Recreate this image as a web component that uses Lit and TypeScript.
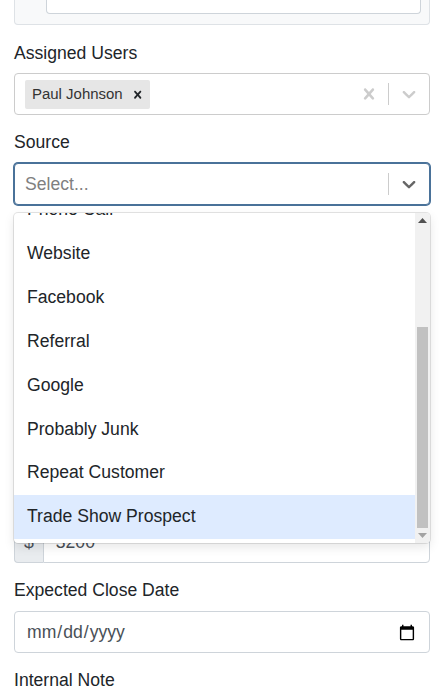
import { LitElement, html, css, svg } from "lit";
import { customElement } from "lit/decorators.js";

const chevron = svg`<path d="M4.516 7.548c0.436-0.446 1.043-0.481 1.576 0l3.908 3.747 3.908-3.747c0.533-0.481 1.141-0.446 1.576 0 0.436 0.445 0.408 1.197 0 1.615-0.406 0.418-4.695 4.502-4.695 4.502-0.217 0.223-0.502 0.335-0.787 0.335s-0.57-0.112-0.789-0.335c0 0-4.287-4.084-4.695-4.502s-0.436-1.17 0-1.615z"></path>`;
const cross = svg`<path d="M14.348 14.849c-0.469 0.469-1.229 0.469-1.697 0l-2.651-3.030-2.651 3.029c-0.469 0.469-1.229 0.469-1.697 0-0.469-0.469-0.469-1.229 0-1.697l2.758-3.15-2.759-3.152c-0.469-0.469-0.469-1.228 0-1.697s1.228-0.469 1.697 0l2.652 3.031 2.651-3.031c0.469-0.469 1.228-0.469 1.697 0s0.469 1.229 0 1.697l-2.758 3.152 2.758 3.15c0.469 0.469 0.469 1.229 0 1.698z"></path>`;

const options = ["Email", "Walk-In", "Trade Show", "Phone Call", "Website", "Facebook", "Referral", "Google", "Probably Junk", "Repeat Customer", "Trade Show Prospect"];

@customElement("app-root")
export class AppRoot extends LitElement {
  static styles = css`
    :host {
      display: block;
      height: 692px;
      overflow: hidden;
      font-family: "Liberation Sans", Arial, sans-serif;
      font-size: 17.6px;
      line-height: 26.4px;
      color: #212529;
      background: #fff;
    }
    .page { padding: 0 16px 0 14px; }
    .card {
      box-sizing: border-box;
      height: 25px;
      margin-bottom: 14px;
      padding: 0 8px 0 31px;
      background: #f8f9fa;
      border: 1px solid #dee2e6;
      border-top: none;
      border-radius: 0 0 4px 4px;
    }
    .card-input {
      height: 14px;
      box-sizing: border-box;
      background: #fff;
      border: 1px solid #ced4da;
      border-top: none;
      border-radius: 0 0 4px 4px;
    }
    .group { margin-bottom: 13.6px; }
    .group.tight { margin-bottom: 11.6px; }
    label { display: block; margin-bottom: 8px; }
    label.first { padding-top: 1px; margin-bottom: 7px; }
    .select {
      box-sizing: border-box;
      height: 42px;
      display: flex;
      align-items: center;
      background: #fff;
      border: 1px solid #ccc;
      border-radius: 4px;
    }
    .select.focus {
      border-color: #4a7299;
      box-shadow: 0 0 0 1px #4a7299;
    }
    .values {
      flex: 1;
      min-width: 0;
      display: flex;
      align-items: center;
      padding: 0 10px;
    }
    .placeholder { color: #808080; }
    .chip {
      display: flex;
      align-items: center;
      height: 29px;
      background: #e6e6e6;
      border-radius: 2px;
      font-size: 14.96px;
      color: #333;
    }
    .chip span { padding: 0 3.3px 0 7px; }
    .chip-x { display: flex; padding: 0 4.4px; color: #212529; }
    .indicators { display: flex; align-items: center; align-self: stretch; }
    .indicators svg { fill: currentColor; display: block; }
    .ind { display: flex; padding: 8.8px; color: #ccc; }
    .focus .ind { color: #666; }
    .sep { width: 1px; height: 22px; background: #ccc; }
    .source { position: relative; }
    .menu {
      position: absolute;
      z-index: 2;
      left: 0;
      right: 0;
      top: 84px;
      box-sizing: border-box;
      height: 330px;
      display: flex;
      overflow: hidden;
      background: #fff;
      border-radius: 4px;
      box-shadow: 0 0 0 1px rgba(0, 0, 0, 0.1), 0 4px 11px rgba(0, 0, 0, 0.1);
    }
    .list { flex: 1; min-width: 0; overflow: hidden; padding: 4px 0; }
    .option { height: 43.85px; box-sizing: border-box; padding: 7.8px 13px 0; }
    .option.active { background: #deebff; }
    .bar {
      width: 15px;
      display: flex;
      flex-direction: column;
      background: #f1f1f1;
    }
    .arrow { height: 15px; display: flex; align-items: center; justify-content: center; }
    .arrow svg { display: block; }
    .track { flex: 1; display: flex; flex-direction: column; justify-content: flex-end; padding: 0 2px; }
    .thumb { height: 201px; background: #c1c1c1; }
    .input {
      display: block;
      box-sizing: border-box;
      width: 100%;
      height: 42px;
      padding: 0 11px;
      font: inherit;
      color: #495057;
      background: #fff;
      border: 1px solid #ced4da;
      border-radius: 4px;
      outline: none;
    }
    .money { display: flex; height: 42px; }
    .prefix {
      display: flex;
      align-items: center;
      padding: 0 9px;
      color: #495057;
      background: #e9ecef;
      border: 1px solid #ced4da;
      border-right: none;
      border-radius: 4px 0 0 4px;
    }
    .money .input { flex: 1; min-width: 0; padding-left: 12px; border-radius: 0 4px 4px 0; }
  `;

  firstUpdated() {
    const list = this.renderRoot.querySelector(".list");
    if (list) list.scrollTop = list.scrollHeight;
  }

  private field(name: string, cls = "") {
    return html`<div class="group ${cls}"><label>${name}</label><input class="input" /></div>`;
  }

  render() {
    return html`
      <div class="page">
        <div class="card"><div class="card-input"></div></div>

        <div class="group">
          <label class="first">Assigned Users</label>
          <div class="select">
            <div class="values">
              <div class="chip">
                <span>Paul Johnson</span>
                <div class="chip-x"><svg width="15.4" height="15.4" viewBox="0 0 20 20" fill="currentColor">${cross}</svg></div>
              </div>
            </div>
            <div class="indicators">
              <div class="ind"><svg width="22" height="22" viewBox="0 0 20 20">${cross}</svg></div>
              <div class="sep"></div>
              <div class="ind"><svg width="22" height="22" viewBox="0 0 20 20">${chevron}</svg></div>
            </div>
          </div>
        </div>

        <div class="group source">
          <label>Source</label>
          <div class="select focus">
            <div class="values"><div class="placeholder">Select...</div></div>
            <div class="indicators">
              <div class="sep"></div>
              <div class="ind"><svg width="22" height="22" viewBox="0 0 20 20">${chevron}</svg></div>
            </div>
          </div>
          <div class="menu">
            <div class="list">
              ${options.map(
                (o, i) => html`<div class="option ${i === options.length - 1 ? "active" : ""}">${o}</div>`
              )}
            </div>
            <div class="bar">
              <div class="arrow"><svg width="9" height="5" viewBox="0 0 9 5" fill="#505050"><path d="M4.5 0L9 5H0z"></path></svg></div>
              <div class="track"><div class="thumb"></div></div>
              <div class="arrow"><svg width="9" height="5" viewBox="0 0 9 5" fill="#a3a3a3"><path d="M0 0H9L4.5 5z"></path></svg></div>
            </div>
          </div>
        </div>

        ${this.field("Company", "tight")}
        ${this.field("Status")}
        ${this.field("Priority")}

        <div class="group">
          <label>Estimated Value</label>
          <div class="money">
            <div class="prefix">$</div>
            <input class="input" value="3200" />
          </div>
        </div>

        <div class="group">
          <label>Expected Close Date</label>
          <input class="input" type="date" />
        </div>

        <div class="group">
          <label>Internal Note</label>
          <textarea class="input"></textarea>
        </div>
      </div>
    `;
  }
}
